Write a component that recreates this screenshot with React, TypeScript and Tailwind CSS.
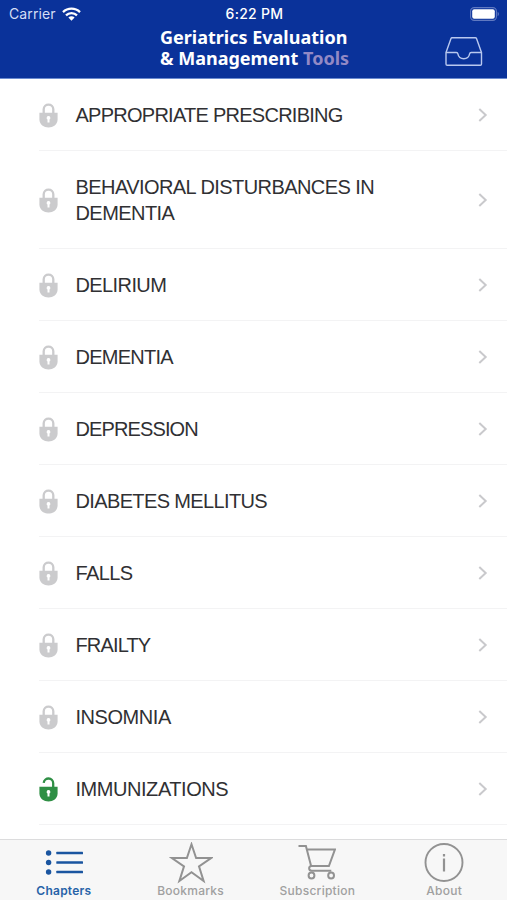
import { FC } from 'react'

type Chapter = {
  title: string
  tracking: string
  unlocked?: boolean
}

const chapters: Chapter[] = [
  { title: 'APPROPRIATE PRESCRIBING', tracking: 'tracking-[-0.74px]' },
  { title: 'BEHAVIORAL DISTURBANCES IN DEMENTIA', tracking: 'tracking-[-0.57px]' },
  { title: 'DELIRIUM', tracking: 'tracking-[-0.6px]' },
  { title: 'DEMENTIA', tracking: 'tracking-[-0.75px]' },
  { title: 'DEPRESSION', tracking: 'tracking-[-0.88px]' },
  { title: 'DIABETES MELLITUS', tracking: 'tracking-[-0.63px]' },
  { title: 'FALLS', tracking: 'tracking-[-0.6px]' },
  { title: 'FRAILTY', tracking: 'tracking-[-0.85px]' },
  { title: 'INSOMNIA', tracking: 'tracking-[-0.45px]' },
  { title: 'IMMUNIZATIONS', tracking: 'tracking-[-0.45px]', unlocked: true },
]

const WifiIcon: FC = () => (
  <svg width="19" height="14" viewBox="0 0 19 14" fill="none" stroke="#fff" strokeWidth="2.3">
    <path d="M1 5.1a12.2 12.2 0 0 1 17 0" />
    <path d="M4 8.3a7.9 7.9 0 0 1 11 0" />
    <path d="M9.5 13.7 6.4 10.6a4.4 4.4 0 0 1 6.2 0z" fill="#fff" stroke="none" />
  </svg>
)

const BatteryIcon: FC = () => (
  <svg width="30" height="14" viewBox="0 0 30 14" fill="none">
    <rect x="0.6" y="0.6" width="25.8" height="12.8" rx="3.6" stroke="#6079c1" strokeWidth="1.1" />
    <rect x="2.2" y="2.2" width="22.6" height="9.6" rx="2" fill="#fff" />
    <path d="M27.6 4.8c1.8.7 1.8 3.7 0 4.4z" fill="#6079c1" />
  </svg>
)

const InboxIcon: FC = () => (
  <svg
    width="38"
    height="30"
    viewBox="0 0 38 30"
    fill="none"
    stroke="#b9c8ef"
    strokeWidth="1.4"
    strokeLinejoin="round"
  >
    <path d="M1 15.5 6 1.6Q6.3.8 7 .8h23.4q.8 0 1.1.8l5 13.9v11.6q0 1.2-1.2 1.2H2.2Q1 28.3 1 27.1z" />
    <path d="M1 15.5h10.3q1.4 0 1.6 1.3c1.2 6.5 10.5 6.5 11.7 0q.2-1.3 1.6-1.3h10.3" />
  </svg>
)

const LockIcon: FC<{ unlocked?: boolean }> = ({ unlocked }) => (
  <svg
    width="19"
    height="25"
    viewBox="0 0 19 25"
    fill="none"
    className={unlocked ? 'text-[#2f8f45]' : 'text-[#cbcbcd]'}
  >
    <path
      d={unlocked ? 'M4.7 5.8C5.3 0 14.2 0 14.2 6.3V11' : 'M4.7 11V6.3c0-6.3 9.6-6.3 9.6 0V11'}
      stroke="currentColor"
      strokeWidth="2.3"
    />
    <path d="M.4 9.7h18.2v6.6c0 11-18.2 11-18.2 0z" fill="currentColor" />
    <path d="M9.5 13a1.9 1.9 0 0 1 1 3.5v3h-2v-3a1.9 1.9 0 0 1 1-3.5z" fill="#fff" />
  </svg>
)

const ChevronIcon: FC = () => (
  <svg width="10" height="14" viewBox="0 0 10 14" fill="none" stroke="#c9c9cc" strokeWidth="2">
    <path d="M1.3 1 7.7 7 1.3 13" />
  </svg>
)

const ListIcon: FC = () => (
  <svg width="38" height="38" viewBox="0 0 38 38" fill="#1a55a0">
    {[9, 18.5, 28].map((y) => (
      <g key={y}>
        <circle cx="3.6" cy={y} r="2.7" />
        <rect x="11.3" y={y - 1.3} width="26.7" height="2.6" rx="0.5" />
      </g>
    ))}
  </svg>
)

const StarIcon: FC = () => (
  <svg width="44" height="42" viewBox="0 0 44 42" fill="none" stroke="#929292" strokeWidth="2">
    <path d="m22.5 2.3 4.6 13.7h15L30 24.4l4.6 14.6-12.1-8.7-12.1 8.7L15 24.4 2.900 16h15z" />
  </svg>
)

const CartIcon: FC = () => (
  <svg width="38" height="38" viewBox="0 0 38 38" fill="none" stroke="#929292" strokeWidth="2">
    <path d="M.5 2h7.400l5.200 20h17.800l6-16.400H8.900" />
    <path d="M13.100 22c-2.700.7-2.700 4.700.6 4.700h19.600" />
    <circle cx="13.500" cy="31.500" r="2.900" />
    <circle cx="33.100" cy="31.500" r="2.900" />
  </svg>
)

const InfoIcon: FC = () => (
  <svg width="40" height="40" viewBox="0 0 40 40" fill="none" stroke="#929292" strokeWidth="1.900">
    <circle cx="20" cy="19.500" r="18.500" />
    <path d="M20 15.500V28.500" strokeWidth="2.200" />
    <path d="M20 11v2.500" strokeWidth="2.200" />
  </svg>
)

const tabs = [
  { label: 'Chapters', icon: <ListIcon />, active: true },
  { label: 'Bookmarks', icon: <StarIcon /> },
  { label: 'Subscription', icon: <CartIcon /> },
  { label: 'About', icon: <InfoIcon /> },
]

const Header: FC = () => (
  <header className="h-[79px] shrink-0 border-b border-[#6b8bd0] bg-[#0a329a] text-white">
    <div className="grid h-[27px] grid-cols-3 items-center pr-[7px] pl-[9px] font-['Inter',sans-serif] text-[14px]">
      <div className="flex items-center gap-[6px] text-[#d5def5]">
        <span className="tracking-[0.1px]">Carrier</span>
        <WifiIcon />
      </div>
      <span className="text-center font-medium tracking-[0.3px] whitespace-nowrap">6:22 PM</span>
      <div className="flex justify-end">
        <BatteryIcon />
      </div>
    </div>
    <div className="flex justify-between pr-[24px] pl-[160px]">
      <h1 className="font-['Noto_Sans',sans-serif] text-[18px] leading-[21px] font-bold whitespace-nowrap">
        Geriatrics Evaluation
        <br />
        &amp; Management <span className="text-[#9289c5]">Tools</span>
      </h1>
      <div className="pt-[10px]">
        <InboxIcon />
      </div>
    </div>
  </header>
)

const ChapterRow: FC<{ chapter: Chapter }> = ({ chapter }) => (
  <li className="pl-[39px]">
    <div className="flex items-center border-b border-[#f3f3f4] pt-[23px] pr-[19px] pb-[22px]">
      <LockIcon unlocked={chapter.unlocked} />
      <span className={`ml-[17.5px] w-[330px] text-[20px] leading-[26px] ${chapter.tracking}`}>
        {chapter.title}
      </span>
      <span className="ml-auto">
        <ChevronIcon />
      </span>
    </div>
  </li>
)

const TabBar: FC = () => (
  <nav className="grid h-[61px] shrink-0 grid-cols-4 border-t border-[#dcdcdd] bg-[#f7f7f7]">
    {tabs.map((tab) => (
      <button key={tab.label} className="flex flex-col items-center pt-[2px] pl-px">
        <span className="flex h-[42px] items-center">{tab.icon}</span>
        <span
          className={`font-['Inter',sans-serif] text-[12px] leading-[14px] tracking-[0.25px] ${
            tab.active ? 'font-semibold text-[#2863a8]' : 'font-medium text-[#a0a0a0]'
          }`}
        >
          {tab.label}
        </span>
      </button>
    ))}
  </nav>
)

export default function App() {
  return (
    <div className="flex h-[900px] w-[507px] flex-col overflow-hidden bg-white font-['Liberation_Sans',sans-serif] text-[#303033]">
      <Header />
      <ul className="min-h-0 flex-1 overflow-hidden">
        {chapters.map((chapter) => (
          <ChapterRow key={chapter.title} chapter={chapter} />
        ))}
      </ul>
      <TabBar />
    </div>
  )
}
